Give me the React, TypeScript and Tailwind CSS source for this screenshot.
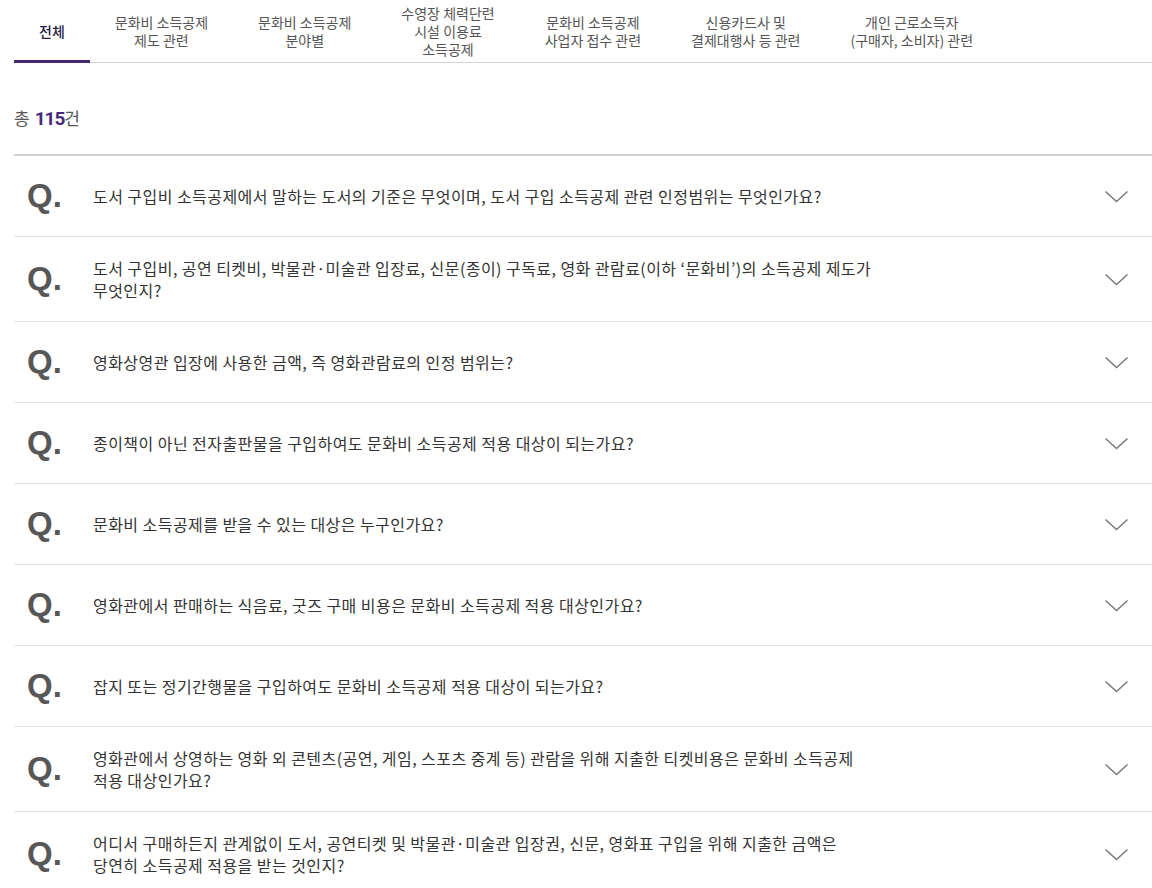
import React from "react";

const tabs: { lines: string[]; active?: boolean }[] = [
  { lines: ["전체"], active: true },
  { lines: ["문화비 소득공제", "제도 관련"] },
  { lines: ["문화비 소득공제", "분야별"] },
  { lines: ["수영장 체력단련", "시설 이용료", "소득공제"] },
  { lines: ["문화비 소득공제", "사업자 접수 관련"] },
  { lines: ["신용카드사 및", "결제대행사 등 관련"] },
  { lines: ["개인 근로소득자", "(구매자, 소비자) 관련"] },
];

const questions: string[][] = [
  ["도서 구입비 소득공제에서 말하는 도서의 기준은 무엇이며, 도서 구입 소득공제 관련 인정범위는 무엇인가요?"],
  ["도서 구입비, 공연 티켓비, 박물관·미술관 입장료, 신문(종이) 구독료, 영화 관람료(이하 ‘문화비’)의 소득공제 제도가", "무엇인지?"],
  ["영화상영관 입장에 사용한 금액, 즉 영화관람료의 인정 범위는?"],
  ["종이책이 아닌 전자출판물을 구입하여도 문화비 소득공제 적용 대상이 되는가요?"],
  ["문화비 소득공제를 받을 수 있는 대상은 누구인가요?"],
  ["영화관에서 판매하는 식음료, 굿즈 구매 비용은 문화비 소득공제 적용 대상인가요?"],
  ["잡지 또는 정기간행물을 구입하여도 문화비 소득공제 적용 대상이 되는가요?"],
  ["영화관에서 상영하는 영화 외 콘텐츠(공연, 게임, 스포츠 중계 등) 관람을 위해 지출한 티켓비용은 문화비 소득공제", "적용 대상인가요?"],
  ["어디서 구매하든지 관계없이 도서, 공연티켓 및 박물관·미술관 입장권, 신문, 영화표 구입을 위해 지출한 금액은", "당연히 소득공제 적용을 받는 것인지?"],
];

function Chevron() {
  return (
    <svg width="23" height="13" viewBox="0 0 23 13" fill="none">
      <path d="M0.5 1.5 L11.5 11.5 L22.5 1.5" stroke="#777" strokeWidth="1.4" />
    </svg>
  );
}

export default function App() {
  return (
    <div
      className="min-h-screen bg-white pl-[14px] overflow-hidden"
      style={{ fontFamily: '"Noto Sans CJK KR", "Noto Sans", sans-serif' }}
    >
      <div className="flex border-b border-[#d4d4d4] h-[63px]">
        {tabs.map((t, i) => (
          <div
            key={i}
            className={
              "relative flex flex-col items-center justify-center px-[25px] text-[14px] leading-[18px] whitespace-nowrap " +
              (t.active ? "text-[#2a1d45] font-medium" : "text-[#555]")
            }
          >
            {t.lines.map((l, j) => (
              <span key={j}>{l}</span>
            ))}
            {t.active && (
              <span className="absolute left-0 right-0 bottom-[-1px] h-[3px] bg-[#45296f]" />
            )}
          </div>
        ))}
      </div>

      <div className="pt-[43px] pb-[23px] text-[17px] leading-[24px] text-[#555] flex items-baseline">
        <span>총</span>
        <span
          className="ml-[5px] font-bold text-[#4a2a78] tracking-[-1px] text-[19px]"
          style={{ fontFamily: '"Roboto", sans-serif' }}
        >
          115
        </span>
        <span>건</span>
      </div>

      <div className="border-t-2 border-[#cfcfcf]">
        {questions.map((q, i) => (
          <div
            key={i}
            className="flex items-center py-5 border-b border-[#e2e2e2] pl-[13px] pr-[24px]"
          >
            <div
              className="w-[66px] shrink-0 h-[40px] leading-[40px] text-[33px] font-bold text-[#575757]"
              style={{ fontFamily: '"Liberation Sans", Arial, sans-serif' }}
            >
              Q.
            </div>
            <div className="flex-1 text-[16px] leading-[22px] tracking-[0.45px] text-[#333]">
              {q.map((l, j) => (
                <div key={j}>{l}</div>
              ))}
            </div>
            <Chevron />
          </div>
        ))}
      </div>
    </div>
  );
}
